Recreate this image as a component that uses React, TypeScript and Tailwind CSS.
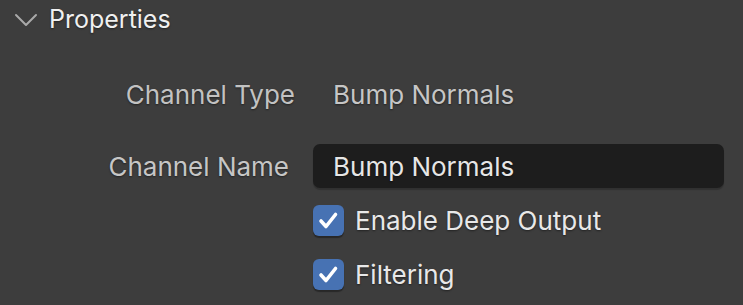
import React from "react";

const ts = "[text-shadow:0_1px_2px_rgba(0,0,0,0.45)]";

function Check({ label }: { label: string }) {
  return (
    <div className="flex h-[44px] items-center">
      <div className="w-[313px] shrink-0" />
      <div className="flex h-[31px] w-[31px] items-center justify-center rounded-[6px] bg-[#4772b3] shadow-[0_2px_1px_rgba(0,0,0,0.35)]">
        <svg width="31" height="31" viewBox="0 0 31 31">
          <polyline points="8,16 13,21.5 22.5,9.5" fill="none" stroke="#ffffff" strokeWidth="3.6" strokeLinecap="round" strokeLinejoin="round" />
        </svg>
      </div>
      <span className={`ml-[11px] text-[26px] text-[#e8e8e8] ${ts}`}>{label}</span>
    </div>
  );
}

export default function App() {
  return (
    <div className="h-[305px] w-[743px] overflow-hidden bg-[#3d3d3d]" style={{ fontFamily: "Inter, 'Noto Sans', sans-serif" }}>
      <div className="flex h-[40px] items-center">
        <svg className="ml-[14px]" width="24" height="14" viewBox="0 0 24 14">
          <polyline points="2,2 12,12 22,2" fill="none" stroke="#a9a9a9" strokeWidth="2" strokeLinecap="round" strokeLinejoin="round" />
        </svg>
        <span className={`ml-[11px] text-[25px] text-[#f0f0f0] ${ts}`}>Properties</span>
      </div>
      <div className="mt-[32px] flex h-[44px] items-center">
        <div className={`w-[295px] shrink-0 text-right text-[26px] text-[#c2c2c2] ${ts}`}>Channel Type</div>
        <div className={`ml-[38px] text-[26px] text-[#c6c6c6] ${ts}`}>Bump Normals</div>
      </div>
      <div className="mt-[28px] flex h-[44px] items-center">
        <div className={`w-[289px] shrink-0 text-right text-[26px] text-[#c6c6c6] ${ts}`}>Channel Name</div>
        <div className="ml-[24px] flex h-[44px] w-[411px] items-center rounded-[7px] bg-[#1d1d1d] pl-[20px] shadow-[0_2px_1px_rgba(0,0,0,0.2)]">
          <span className={`text-[26px] text-[#e6e6e6] ${ts}`}>Bump Normals</span>
        </div>
      </div>
      <div className="mt-[10px]">
        <Check label="Enable Deep Output" />
      </div>
      <div className="mt-[10px]">
        <Check label="Filtering" />
      </div>
    </div>
  );
}
